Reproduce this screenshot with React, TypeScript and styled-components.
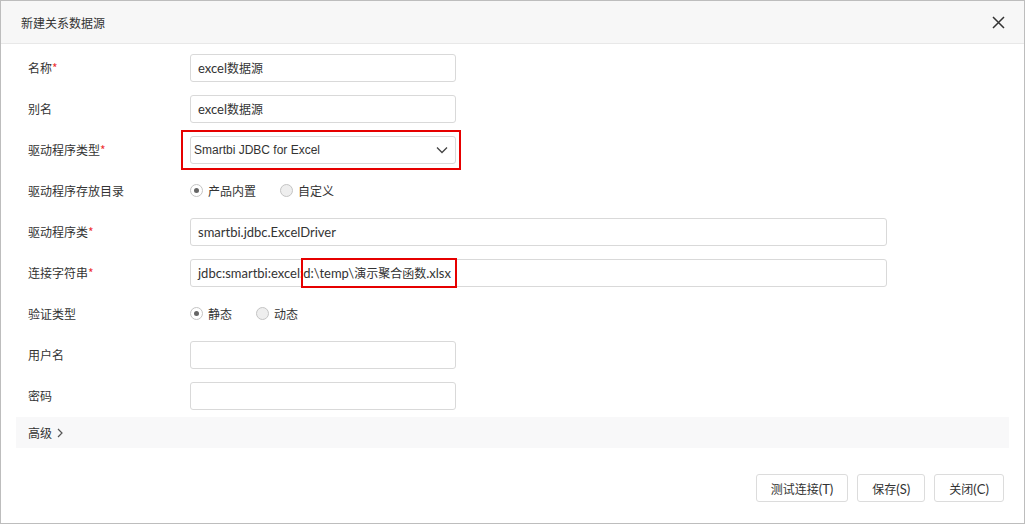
import React from "react";
import styled, { createGlobalStyle } from "styled-components";

const GlobalStyle = createGlobalStyle`
  html, body {
    margin: 0;
    padding: 0;
    background: #fff;
  }
  body {
    font-family: "Noto Sans", "Noto Sans CJK SC", sans-serif;
    font-size: 12px;
    color: #333;
  }
`;

const Dialog = styled.div`
  box-sizing: border-box;
  width: 1025px;
  height: 524px;
  border: 1px solid #bdbdbd;
  display: flex;
  flex-direction: column;
  background: #fff;
`;

const Header = styled.div`
  height: 42px;
  flex: none;
  display: flex;
  align-items: center;
  justify-content: space-between;
  padding: 0 18px 0 20px;
  background: #f7f7f7;
  border-bottom: 1px solid #e8e8e8;
`;

const Title = styled.span`
  font-family: "Noto Sans CJK SC", sans-serif;
  font-size: 12px;
  color: #333;
`;

const CloseButton = styled.button`
  border: none;
  background: none;
  padding: 0;
  width: 16px;
  height: 16px;
  display: flex;
  align-items: center;
  justify-content: center;
  cursor: pointer;
`;

const Body = styled.div`
  flex: none;
  padding: 3px 15px 0 15px;
  display: flex;
  flex-direction: column;
`;

const Row = styled.div`
  height: 41px;
  display: flex;
  align-items: center;
  padding-left: 12px;
`;

const Label = styled.div`
  width: 162px;
  flex: none;
  font-family: "Noto Sans CJK SC", sans-serif;
  font-size: 12px;
  color: #333;
`;

const Star = styled.span`
  color: #e33;
`;

// CJK glyphs in the source render at 12px while Latin text is 13px
const Cjk = styled.span`
  font-family: "Noto Sans CJK SC", sans-serif;
  font-size: 12px;
`;

const Field = styled.div<{ $wide?: boolean }>`
  position: relative;
  box-sizing: border-box;
  width: ${(p) => (p.$wide ? "697px" : "266px")};
  height: 28px;
  border: 1px solid #d9d9d9;
  border-radius: 3px;
  padding: 0 7px;
  display: flex;
  align-items: center;
  justify-content: space-between;
  white-space: nowrap;
  font-family: Lato, "Noto Sans CJK SC", sans-serif;
  font-size: 13px;
  color: #333;
  background: #fff;
`;

const SelectText = styled.span`
  font-family: "Liberation Sans", "Noto Sans CJK SC", sans-serif;
  font-size: 12px;
  margin-left: -4px;
`;

const Annotation = styled.div`
  position: absolute;
  left: -10px;
  right: -6px;
  top: -7px;
  bottom: -7px;
  border: 2px solid #e60000;
  pointer-events: none;
`;

const Marked = styled.span`
  position: relative;
  &::after {
    content: "";
    position: absolute;
    left: -2px;
    right: -6px;
    top: -7px;
    bottom: -7px;
    border: 2px solid #e60000;
  }
`;

const RadioGroup = styled.div`
  display: flex;
  align-items: center;
  gap: 24px;
`;

const RadioItem = styled.label`
  display: flex;
  align-items: center;
  gap: 5px;
  font-family: "Noto Sans CJK SC", sans-serif;
  font-size: 12px;
  color: #333;
`;

const RadioDot = styled.span<{ $checked?: boolean }>`
  box-sizing: border-box;
  width: 13px;
  height: 13px;
  border-radius: 50%;
  border: 1px solid #c4c4c4;
  background: ${(p) => (p.$checked ? "#fff" : "#eeeeee")};
  display: flex;
  align-items: center;
  justify-content: center;
  &::after {
    content: "";
    display: ${(p) => (p.$checked ? "block" : "none")};
    width: 5px;
    height: 5px;
    border-radius: 50%;
    background: #666;
  }
`;

const Advanced = styled.div`
  margin-top: 1px;
  height: 31px;
  background: #f8f8f9;
  display: flex;
  align-items: center;
  padding-left: 12px;
  gap: 4px;
  font-family: "Noto Sans CJK SC", sans-serif;
  font-size: 12px;
  color: #333;
`;

const Footer = styled.div`
  flex: 1;
  display: flex;
  justify-content: flex-end;
  align-items: flex-start;
  gap: 9px;
  padding: 26px 20px 0 0;
`;

const Button = styled.button`
  box-sizing: border-box;
  height: 28px;
  padding: 0 14px;
  border: 1px solid #dcdcdc;
  border-radius: 3px;
  background: #fff;
  font-family: Lato, "Noto Sans CJK SC", sans-serif;
  font-size: 13px;
  color: #333;
  cursor: pointer;
`;

const Chevron = ({ dir }: { dir: "down" | "right" }) => (
  <svg width={dir === "down" ? 12 : 8} height={dir === "down" ? 8 : 10} viewBox={dir === "down" ? "0 0 12 8" : "0 0 8 10"}>
    {dir === "down" ? (
      <path d="M1 1.5 L6 6.5 L11 1.5" fill="none" stroke="#444" strokeWidth="1.3" />
    ) : (
      <path d="M2 1 L6 5 L2 9" fill="none" stroke="#555" strokeWidth="1.2" />
    )}
  </svg>
);

export default function App() {
  return (
    <>
      <GlobalStyle />
      <Dialog>
        <Header>
          <Title>新建关系数据源</Title>
          <CloseButton aria-label="关闭">
            <svg width="13" height="13" viewBox="0 0 13 13">
              <path d="M1 1 L12 12 M12 1 L1 12" stroke="#333" strokeWidth="1.5" />
            </svg>
          </CloseButton>
        </Header>
        <Body>
          <Row>
            <Label>
              名称<Star>*</Star>
            </Label>
            <Field>
              <span>
                excel<Cjk>数据源</Cjk>
              </span>
            </Field>
          </Row>
          <Row>
            <Label>别名</Label>
            <Field>
              <span>
                excel<Cjk>数据源</Cjk>
              </span>
            </Field>
          </Row>
          <Row>
            <Label>
              驱动程序类型<Star>*</Star>
            </Label>
            <Field>
              <SelectText>Smartbi JDBC for Excel</SelectText>
              <Chevron dir="down" />
              <Annotation />
            </Field>
          </Row>
          <Row>
            <Label>驱动程序存放目录</Label>
            <RadioGroup>
              <RadioItem>
                <RadioDot $checked />
                产品内置
              </RadioItem>
              <RadioItem>
                <RadioDot />
                自定义
              </RadioItem>
            </RadioGroup>
          </Row>
          <Row>
            <Label>
              驱动程序类<Star>*</Star>
            </Label>
            <Field $wide>smartbi.jdbc.ExcelDriver</Field>
          </Row>
          <Row>
            <Label>
              连接字符串<Star>*</Star>
            </Label>
            <Field $wide>
              <span>
                jdbc:smartbi:excel:
                <Marked>
                  d:\temp\<Cjk>演示聚合函数</Cjk>.xlsx
                </Marked>
              </span>
            </Field>
          </Row>
          <Row>
            <Label>验证类型</Label>
            <RadioGroup>
              <RadioItem>
                <RadioDot $checked />
                静态
              </RadioItem>
              <RadioItem>
                <RadioDot />
                动态
              </RadioItem>
            </RadioGroup>
          </Row>
          <Row>
            <Label>用户名</Label>
            <Field />
          </Row>
          <Row>
            <Label>密码</Label>
            <Field />
          </Row>
          <Advanced>
            高级 <Chevron dir="right" />
          </Advanced>
        </Body>
        <Footer>
          <Button>
            <Cjk>测试连接</Cjk>(T)
          </Button>
          <Button>
            <Cjk>保存</Cjk>(S)
          </Button>
          <Button>
            <Cjk>关闭</Cjk>(C)
          </Button>
        </Footer>
      </Dialog>
    </>
  );
}
